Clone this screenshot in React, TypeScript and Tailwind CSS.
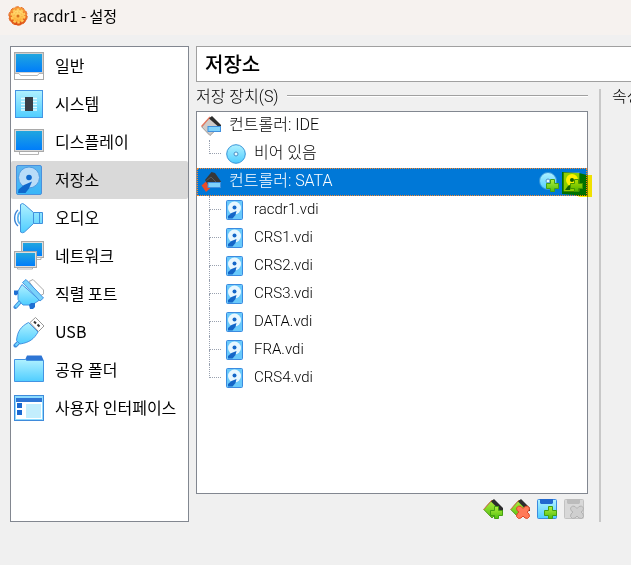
import { type ReactNode } from 'react'
import clsx from 'clsx'

interface IconProps {
    children: ReactNode
    box?: number
    className?: string
}

interface Section {
    label: string
    icon: ReactNode
}

const Icon = ({ children, box = 20, className = 'size-5' }: IconProps) => (
    <svg
        viewBox={`0 0 ${box} ${box}`}
        className={clsx('shrink-0', className)}
        aria-hidden="true"
    >
        {children}
    </svg>
)

const SectionIcon = ({ children }: { children: ReactNode }) => (
    <Icon box={32} className="size-8">
        {children}
    </Icon>
)

// Gradients shared by all the icons
const Gradients = () => (
    <svg className="absolute size-0" aria-hidden="true">
        <defs>
            <linearGradient id="screen" x1="0" y1="0" x2="0" y2="1">
                <stop offset="0" stopColor="#21a6df" />
                <stop offset="1" stopColor="#007dfa" />
            </linearGradient>
            <linearGradient id="sky" x1="0" y1="0" x2="0" y2="1">
                <stop offset="0" stopColor="#b0f1ff" />
                <stop offset="1" stopColor="#4fcdff" />
            </linearGradient>
            <linearGradient id="drive" x1="0" y1="0" x2="0" y2="1">
                <stop offset="0" stopColor="#5fb6f0" />
                <stop offset="1" stopColor="#38b6f8" />
            </linearGradient>
            <linearGradient id="leaf" x1="0" y1="0" x2="0" y2="1">
                <stop offset="0" stopColor="#b4ee3c" />
                <stop offset="1" stopColor="#4fc010" />
            </linearGradient>
            <linearGradient id="rim" x1="0" y1="0" x2="0" y2="1">
                <stop offset="0" stopColor="#f9a03a" />
                <stop offset="1" stopColor="#dd4c14" />
            </linearGradient>
            <linearGradient id="gear" x1="0" y1="0" x2="0" y2="1">
                <stop offset="0" stopColor="#ffe07a" />
                <stop offset="1" stopColor="#ffae34" />
            </linearGradient>
        </defs>
    </svg>
)

const GearIcon = () => (
    <Icon>
        <circle cx="10" cy="10" r="9.200" fill="url(#rim)" />
        <circle
            cx="10"
            cy="10"
            r="9.200"
            fill="none"
            stroke="#e56a24"
            strokeDasharray="3.600 2.180"
        />
        <circle cx="10" cy="10" r="6" fill="url(#gear)" />
        <circle
            cx="10"
            cy="10"
            r="6.500"
            fill="none"
            stroke="#ffcc5c"
            strokeWidth="2"
            strokeDasharray="2.500 1.580"
        />
        <circle
            cx="10"
            cy="10"
            r="4"
            fill="none"
            stroke="#f5a53a"
            strokeDasharray="1 2.140"
        />
        <circle cx="10" cy="10" r="1.500" fill="#d5701c" />
    </Icon>
)

const GeneralIcon = () => (
    <SectionIcon>
        <rect x="1.500" y="2.500" width="29" height="27" fill="#fff" stroke="#a9a9a9" />
        <path d="M2 3h28v20H2z" fill="#cfcfcf" />
        <path d="M3 4h26v18H3z" fill="url(#screen)" />
        <path d="M2 23.500h4l1.500 2h17l1.500-2h4" fill="none" stroke="#b4b4b4" />
    </SectionIcon>
)

const SystemIcon = () => (
    <SectionIcon>
        <rect x="2.500" y="2.500" width="27" height="27" fill="url(#sky)" stroke="#4394e3" />
        <path
            d="M8 10.500h16M8 13.500h16M8 16.500h16M8 19.500h16M8 22h16"
            stroke="#e6fbff"
            strokeWidth="1.400"
        />
        <rect x="12" y="9" width="8" height="14" fill="#383e48" />
    </SectionIcon>
)

const DisplayIcon = () => (
    <SectionIcon>
        <path d="M6.500 25v3.500h19V25" fill="#fff" stroke="#b4b4b4" />
        <rect x="1.500" y="3.500" width="29" height="22" fill="#d8d8d8" stroke="#a9a9a9" />
        <path d="M3 5h26v19H3z" fill="url(#screen)" />
    </SectionIcon>
)

const StorageIcon = () => (
    <SectionIcon>
        <rect x="3.500" y="1.500" width="25" height="29" rx="1.500" fill="url(#drive)" stroke="#4a90dc" />
        <circle cx="16" cy="13.500" r="10.500" fill="#b9dcf8" stroke="#4f9be2" />
        <circle cx="16" cy="13.500" r="2.800" fill="#0f68cc" />
        <path
            d="M19 17.500l-8 3.500-5.500 4.500-.500 3.500h7.500l3.500-4.500z"
            fill="#0f68cc"
        />
    </SectionIcon>
)

const AudioIcon = () => (
    <SectionIcon>
        <path d="M5 8C.5 12 .5 20 5 24" fill="none" stroke="#3f86d6" strokeWidth="1.400" />
        <path d="M7 10c-3 3-3 9 0 12" fill="none" stroke="#5fb4ee" strokeWidth="1.800" />
        <path
            d="M7.500 2.500q2-2 4 0l9 8h9v11h-9l-9 8.500q-2 1.500-4 0z"
            fill="url(#sky)"
            stroke="#4191dd"
        />
        <path d="M20.500 10.500v11M26.500 10.500v11" stroke="#4191dd" />
    </SectionIcon>
)

const NetworkIcon = () => (
    <SectionIcon>
        <rect x="8.500" y="1.500" width="22" height="16" fill="#ddd" stroke="#a9a9a9" />
        <path d="M10 3h19v13H10z" fill="url(#screen)" />
        <path d="M24 17.500h4v2h-4" fill="#fff" stroke="#b4b4b4" />
        <path d="M4.500 26v3h15v-3" fill="#fff" stroke="#b4b4b4" />
        <rect x="1.500" y="11.500" width="22" height="16" fill="#ddd" stroke="#a9a9a9" />
        <path d="M3 13h19v13H3z" fill="url(#screen)" />
    </SectionIcon>
)

const SerialIcon = () => (
    <SectionIcon>
        <path d="M16 3.500l4-2L30.500 12v4l-4 2z" fill="#fff" stroke="#a9a9a9" />
        <path d="M7 24l-4.500 5" stroke="#3f8bdb" strokeWidth="4" strokeLinecap="round" />
        <path d="M7 24l-4.500 5" stroke="#6fd6ff" strokeWidth="2" />
        <path
            d="M9 6.500L5 13v8.500l5 5.500h9l7.500-5z"
            fill="url(#sky)"
            stroke="#4394e3"
        />
        <path
            d="M9.500 4.500l3.500-3 17.500 18.500-3.500 3z"
            fill="#79d2fa"
            stroke="#4394e3"
        />
        <path d="M1 12.500h4v3.500l-2 1.500-2-1z" fill="#1f6fd2" />
        <path d="M16 27l2-2h4v4l-2 2h-3z" fill="#1f6fd2" />
    </SectionIcon>
)

const UsbIcon = () => (
    <SectionIcon>
        <path d="M17 6.500l5.500-5L31 10l-5.500 5.500z" fill="#fff" stroke="#989898" />
        <path d="M21 5.500l2 2M24.500 8.500l2 2" stroke="#333" strokeWidth="2" />
        <path d="M6 26l-3.500 3.500" stroke="#3f8bdb" strokeWidth="4" strokeLinecap="round" />
        <path d="M6 26l-3.500 3.500" stroke="#6fd6ff" strokeWidth="2" />
        <path
            d="M15.500 6.500L25 16c-4 7-8.500 10.500-18 12l-3.500-3.500C4.500 15 8 10.500 15.500 6.500z"
            fill="url(#sky)"
            stroke="#4394e3"
        />
    </SectionIcon>
)

const FolderIcon = () => (
    <SectionIcon>
        <path d="M12 6l2-4.500h14.500L30.500 6v3H12z" fill="#2e75d4" />
        <path d="M1.500 5.500h11l1.500 1h16.500v21h-29z" fill="url(#sky)" stroke="#4394e3" />
    </SectionIcon>
)

const InterfaceIcon = () => (
    <SectionIcon>
        <rect x="1.500" y="3.500" width="29" height="25" fill="#8ddcff" stroke="#3f8bdb" />
        <path d="M3 10h26v17H3z" fill="#fff" />
        <path d="M3 6h26v4H3z" fill="#2e75d4" />
        <path d="M4 11h5v5H4zM4 18h5v5H4z" fill="#1a69d0" />
        <path d="M13 12h15v14H13z" fill="#c3eefd" />
    </SectionIcon>
)

const Controller = ({ body }: { body: 'gray' | 'dark' }) => (
    <Icon>
        {body === 'gray' ? (
            <>
                <path d="M9 1L.8 11 9 19.500 19 10z" fill="#cfcbc9" stroke="#9c9896" />
                <path d="M9 1L.5 10.500" stroke="#e8755b" strokeWidth="1.200" />
                <path d="M8 2.500L11 0l9 9v4z" fill="#2d2d2d" />
            </>
        ) : (
            <>
                <path d="M.5 13.500l5-4.500 5 6-5.500 5z" fill="#ec4b26" />
                <path d="M4 8l6.500-8 3.500 1 6 8.500V16H9z" fill="#383838" />
                <path d="M5.500 8.500L10 5l5 5" stroke="#5a5a5a" fill="none" />
            </>
        )}
        <rect x="7" y="10.500" width="12.500" height="5" fill="#7fd2fb" stroke="#3f8fdd" />
    </Icon>
)

const DiscIcon = () => (
    <Icon>
        <circle cx="10" cy="10" r="9.300" fill="url(#sky)" stroke="#3795d8" />
        <circle cx="10" cy="10" r="2" fill="#e8fbff" stroke="#4a90c8" />
    </Icon>
)

const DiskIcon = () => (
    <Icon>
        <rect x=".5" y=".5" width="16" height="19" rx="1" fill="#69c9fb" stroke="#3b8be0" />
        <circle cx="8.500" cy="8" r="6.500" fill="#e8f7ff" />
        <circle cx="8.500" cy="7.500" r="2" fill="#1466c8" />
        <path d="M10.500 11l-5 2L2 16v2.500h4.500l3-3.500z" fill="#1466c8" />
    </Icon>
)

const Plus = () => (
    <path
        d="M11.500 7.500h4v4h4v5h-4v3h-4v-3h-4v-5h4z"
        fill="url(#leaf)"
        stroke="#44a012"
    />
)

const Cross = ({ muted }: { muted?: boolean }) => (
    <path
        d="M6.500 9l2-2 2.500.5 2 2 2-2 2.500-.5 2 2-.5 2.500-2 1.500 2 2 .5 2.500-2 2-2.500-.5-2-2-2 2-2.500.5-2-2 .5-2.500 2-2-2-1.500z"
        fill={muted ? '#cfcfcf' : '#ff7a58'}
        stroke={muted ? '#b2b2b2' : '#df4a27'}
    />
)

const GreenController = () => (
    <>
        <path d="M9 1L.8 10.500 9 19l9-9z" fill="url(#leaf)" stroke="#579b22" />
        <path d="M9 1L.5 10.500" stroke="#e8755b" />
        <path d="M8 2.500L11 0l9 9v3h-2.500z" fill="#2d2d2d" />
    </>
)

const Floppy = ({ muted }: { muted?: boolean }) => (
    <>
        <rect
            x=".5"
            y=".5"
            width="19"
            height="19"
            rx="1"
            fill={muted ? '#d8d8d8' : 'url(#sky)'}
            stroke={muted ? '#c2c2c2' : '#3b8be0'}
        />
        <path d="M3 0h13v4l-1 1H4L3 4z" fill={muted ? '#bcbcbc' : '#2168cf'} />
    </>
)

const sections: Section[] = [
    { label: '일반', icon: <GeneralIcon /> },
    { label: '시스템', icon: <SystemIcon /> },
    { label: '디스플레이', icon: <DisplayIcon /> },
    { label: '저장소', icon: <StorageIcon /> },
    { label: '오디오', icon: <AudioIcon /> },
    { label: '네트워크', icon: <NetworkIcon /> },
    { label: '직렬 포트', icon: <SerialIcon /> },
    { label: 'USB', icon: <UsbIcon /> },
    { label: '공유 폴더', icon: <FolderIcon /> },
    { label: '사용자 인터페이스', icon: <InterfaceIcon /> }
]

const disks = [
    'racdr1.vdi',
    'CRS1.vdi',
    'CRS2.vdi',
    'CRS3.vdi',
    'DATA.vdi',
    'FRA.vdi',
    'CRS4.vdi'
]

const Attachment = ({
    label,
    icon,
    last
}: {
    label: string
    icon: ReactNode
    last?: boolean
}) => (
    <li role="treeitem" className="flex h-7 items-center pl-3">
        <span className="flex h-7 w-3 flex-col">
            <span className="h-3.5 border-b border-l border-dotted border-gray-400" />
            {!last && (
                <span className="h-3.5 border-l border-dotted border-gray-400" />
            )}
        </span>
        <span className="ml-[5px] mr-2 flex">{icon}</span>
        <span className="pb-0.5">{label}</span>
    </li>
)

const StorageTree = () => (
    <ul
        role="tree"
        aria-label="저장 장치"
        className="min-h-0 flex-1 border border-[#828790] bg-white"
    >
        <li role="treeitem">
            <div className="flex h-7 items-center gap-2 pl-1">
                <Controller body="gray" />
                <span className="pb-0.5">컨트롤러: IDE</span>
            </div>
            <ul role="group">
                <Attachment label="비어 있음" icon={<DiscIcon />} last />
            </ul>
        </li>
        <li role="treeitem" aria-selected="true">
            <div className="relative flex h-7 items-center gap-2 bg-[#0078d7] pl-1 text-white outline-1 -outline-offset-1 outline-dotted outline-[#ff8728]">
                <Controller body="dark" />
                <span className="flex-1 pb-0.5">컨트롤러: SATA</span>
                <span className="flex gap-1 pr-1">
                    <button type="button" aria-label="광학 드라이브 추가">
                        <Icon>
                            <circle cx="9" cy="9" r="8.500" fill="url(#sky)" stroke="#3795d8" />
                            <circle cx="9" cy="9" r="2" fill="#e8fbff" stroke="#4a90c8" />
                            <Plus />
                        </Icon>
                    </button>
                    <button type="button" aria-label="하드 디스크 추가">
                        <Icon>
                            <rect x=".5" y=".5" width="16" height="19" rx="1" fill="#8fdcff" stroke="#3b8be0" />
                            <circle cx="9" cy="8" r="6" fill="#fff" />
                            <circle cx="9" cy="8" r="2" fill="#1466c8" />
                            <path d="M9 12l-4 2-3 4h5z" fill="#1466c8" />
                            <Plus />
                        </Icon>
                    </button>
                </span>
                {/* highlighter mark over the add disk button */}
                <svg
                    viewBox="0 0 30 26"
                    className="pointer-events-none absolute -right-[5px] top-1 h-[26px] w-[30px] mix-blend-multiply"
                    aria-hidden="true"
                >
                    <path d="M0 0l17 1 8 2h5v22H18l-5-2-13-1z" fill="#fff000" />
                </svg>
            </div>
            <ul role="group" className="text-[15px]">
                {disks.map((disk, i) => (
                    <Attachment
                        key={disk}
                        label={disk}
                        icon={<DiskIcon />}
                        last={i === disks.length - 1}
                    />
                ))}
            </ul>
        </li>
    </ul>
)

const Toolbar = () => (
    <div className="flex justify-end gap-[7px] pb-[3px] pr-1 pt-[5px]">
        <button type="button" aria-label="컨트롤러 추가">
            <Icon>
                <GreenController />
                <Plus />
            </Icon>
        </button>
        <button type="button" aria-label="컨트롤러 삭제">
            <Icon>
                <GreenController />
                <Cross />
            </Icon>
        </button>
        <button type="button" aria-label="연결 추가">
            <Icon>
                <Floppy />
                <Plus />
            </Icon>
        </button>
        <button type="button" aria-label="연결 삭제" disabled>
            <Icon>
                <Floppy muted />
                <Cross muted />
            </Icon>
        </button>
    </div>
)

export default function App() {
    return (
        <div className="flex h-screen flex-col overflow-hidden bg-[#f0f0f0] font-['Noto_Sans_CJK_KR',sans-serif] text-black">
            <Gradients />
            <header className="flex h-[35px] shrink-0 items-center gap-[5px] bg-[#f6f2ef] px-2 pb-[3px] text-[15px]">
                <GearIcon />
                <h1>racdr1 - 설정</h1>
            </header>
            <div className="flex min-h-0 flex-1 gap-[7px] pb-[43px] pl-2.5 pt-[11px]">
                <nav className="w-[179px] shrink-0 border border-[#828790] bg-white">
                    {sections.map(({ label, icon }) => (
                        <button
                            key={label}
                            type="button"
                            className={clsx(
                                'flex h-[38px] w-full items-center gap-2.5 whitespace-nowrap pl-0.5 text-base',
                                label === '저장소' && 'rounded-xs bg-[#d9d9d9]'
                            )}
                        >
                            {icon}
                            <span className="pb-0.5">{label}</span>
                        </button>
                    ))}
                </nav>
                <main className="flex min-w-0 flex-1 flex-col">
                    <h2 className="flex h-9 shrink-0 items-center border border-r-0 border-[#a0a0a0] bg-white pl-2 text-xl font-medium">
                        저장소
                    </h2>
                    <div className="mt-[7px] flex min-h-0 flex-1 font-[Roboto,'Noto_Sans_CJK_KR',sans-serif] text-base font-light">
                        <section className="flex min-w-0 flex-1 flex-col">
                            <div className="flex h-[22px] shrink-0 items-start gap-2 leading-4">
                                <h3>저장 장치(S)</h3>
                                <span className="mt-1.5 h-0.5 flex-1 border-b border-t border-b-white border-t-[#a0a0a0]" />
                            </div>
                            <StorageTree />
                            <Toolbar />
                        </section>
                        <section className="ml-[11px] w-8 overflow-hidden whitespace-nowrap border-l-2 border-[#c8c8c8] pl-[11px]">
                            <h3 className="leading-4">속성</h3>
                        </section>
                    </div>
                </main>
            </div>
        </div>
    )
}
